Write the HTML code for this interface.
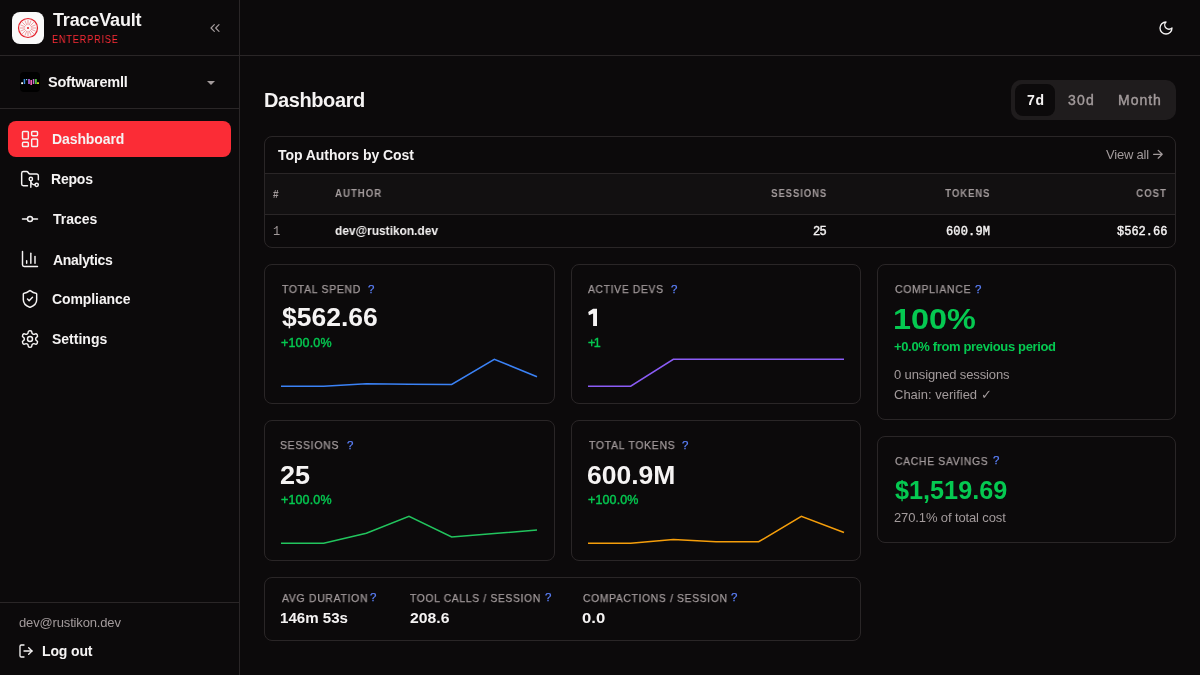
<!DOCTYPE html>
<html lang="en"><head><meta charset="utf-8"><title>TraceVault Dashboard</title>
<style>
*{box-sizing:border-box;margin:0;padding:0}
html,body{width:1200px;height:675px;overflow:hidden;background:#0c0a0b;font-family:'Liberation Sans', sans-serif;color:#f5f3f3}
.a{position:absolute}
.t{position:absolute;white-space:nowrap;line-height:1;will-change:transform}
svg{position:absolute;overflow:visible}
</style></head><body>
<div class="a" style="left:239px;top:0px;width:1px;height:675px;background:#2a2627"></div>
<div class="a" style="left:0px;top:55px;width:239px;height:1px;background:#2a2627"></div>
<div class="a" style="left:0px;top:108px;width:239px;height:1px;background:#2a2627"></div>
<div class="a" style="left:0px;top:602px;width:239px;height:1px;background:#2a2627"></div>
<div class="a" style="left:240px;top:55px;width:960px;height:1px;background:#2a2627"></div>
<div class="a" style="left:12px;top:12px;width:32px;height:32px;background:#fafafa;border-radius:8px"></div>
<svg style="left:18px;top:17.8px" width="20" height="20" viewBox="0 0 20 20" fill="none"><circle cx="10" cy="10" r="9.5" stroke="#e5222c" stroke-width="1.2"/><line x1="13.00" y1="10.00" x2="18.30" y2="10.00" stroke="#e5222c" stroke-opacity="0.35" stroke-width="1.3"/><line x1="12.77" y1="11.15" x2="17.67" y2="13.18" stroke="#e5222c" stroke-opacity="0.6" stroke-width="0.7"/><line x1="12.12" y1="12.12" x2="15.87" y2="15.87" stroke="#e5222c" stroke-opacity="0.6" stroke-width="0.7"/><line x1="11.15" y1="12.77" x2="13.18" y2="17.67" stroke="#e5222c" stroke-opacity="0.6" stroke-width="0.7"/><line x1="10.00" y1="13.00" x2="10.00" y2="18.30" stroke="#e5222c" stroke-opacity="0.35" stroke-width="1.3"/><line x1="8.85" y1="12.77" x2="6.82" y2="17.67" stroke="#e5222c" stroke-opacity="0.6" stroke-width="0.7"/><line x1="7.88" y1="12.12" x2="4.13" y2="15.87" stroke="#e5222c" stroke-opacity="0.6" stroke-width="0.7"/><line x1="7.23" y1="11.15" x2="2.33" y2="13.18" stroke="#e5222c" stroke-opacity="0.6" stroke-width="0.7"/><line x1="7.00" y1="10.00" x2="1.70" y2="10.00" stroke="#e5222c" stroke-opacity="0.35" stroke-width="1.3"/><line x1="7.23" y1="8.85" x2="2.33" y2="6.82" stroke="#e5222c" stroke-opacity="0.6" stroke-width="0.7"/><line x1="7.88" y1="7.88" x2="4.13" y2="4.13" stroke="#e5222c" stroke-opacity="0.6" stroke-width="0.7"/><line x1="8.85" y1="7.23" x2="6.82" y2="2.33" stroke="#e5222c" stroke-opacity="0.6" stroke-width="0.7"/><line x1="10.00" y1="7.00" x2="10.00" y2="1.70" stroke="#e5222c" stroke-opacity="0.35" stroke-width="1.3"/><line x1="11.15" y1="7.23" x2="13.18" y2="2.33" stroke="#e5222c" stroke-opacity="0.6" stroke-width="0.7"/><line x1="12.12" y1="7.88" x2="15.87" y2="4.13" stroke="#e5222c" stroke-opacity="0.6" stroke-width="0.7"/><line x1="12.77" y1="8.85" x2="17.67" y2="6.82" stroke="#e5222c" stroke-opacity="0.6" stroke-width="0.7"/><circle cx="10" cy="10" r="1.1" fill="#e5222c"/></svg>
<svg style="left:207px;top:20px" width="16" height="16" viewBox="0 0 24 24" fill="none" stroke="#a39b9c" stroke-width="1.8" stroke-linecap="round" stroke-linejoin="round"><path d="m11 17-5-5 5-5"/><path d="m18 17-5-5 5-5"/></svg>
<svg style="left:20px;top:72px" width="20" height="20" viewBox="0 0 20 20"><rect width="20" height="20" rx="4" fill="#000"/><rect x="1.2" y="10.3" width="1.8" height="1.8" fill="#fff"/><rect x="3.7" y="7" width="1.5" height="5" fill="#3b8fe0"/><rect x="6" y="7" width="1.2" height="1.2" fill="#7cc8f0"/><rect x="8" y="7" width="2" height="5" fill="#9a55c0"/><rect x="10.4" y="8" width="1.6" height="5" fill="#f060b0"/><rect x="12.8" y="7" width="1.5" height="5" fill="#c070d0"/><rect x="15" y="7" width="1.8" height="5" fill="#50c040"/><rect x="17" y="10.3" width="2" height="1.7" fill="#d8d020"/></svg>
<svg style="left:207px;top:81px" width="8" height="4" viewBox="0 0 8 4"><path d="M0 0h8L4 4z" fill="#a39b9c"/></svg>
<div class="a" style="left:8px;top:121px;width:223px;height:36px;background:#fb2c36;border-radius:8px"></div>
<svg style="left:20px;top:129px" width="20" height="20" viewBox="0 0 24 24" fill="none" stroke="#f5f3f3" stroke-width="1.75" stroke-linecap="round" stroke-linejoin="round"><rect width="7" height="9" x="3" y="3" rx="1"/><rect width="7" height="5" x="14" y="3" rx="1"/><rect width="7" height="9" x="14" y="12" rx="1"/><rect width="7" height="5" x="3" y="16" rx="1"/></svg>
<svg style="left:20px;top:169px" width="20" height="20" viewBox="0 0 24 24" fill="none" stroke="#f5f3f3" stroke-width="1.75" stroke-linecap="round" stroke-linejoin="round"><path d="M18 19a5 5 0 0 1-5-5v8"/><path d="M9 20H4a2 2 0 0 1-2-2V5a2 2 0 0 1 2-2h3.9a2 2 0 0 1 1.69.9l.81 1.2a2 2 0 0 0 1.67.9H20a2 2 0 0 1 2 2v5"/><circle cx="13" cy="12" r="2"/><circle cx="20" cy="19" r="2"/></svg>
<svg style="left:20px;top:209px" width="20" height="20" viewBox="0 0 24 24" fill="none" stroke="#f5f3f3" stroke-width="1.75" stroke-linecap="round" stroke-linejoin="round"><circle cx="12" cy="12" r="3"/><line x1="3" x2="9" y1="12" y2="12"/><line x1="15" x2="21" y1="12" y2="12"/></svg>
<svg style="left:20px;top:249px" width="20" height="20" viewBox="0 0 24 24" fill="none" stroke="#f5f3f3" stroke-width="1.75" stroke-linecap="round" stroke-linejoin="round"><path d="M3 3v16a2 2 0 0 0 2 2h16"/><path d="M18 17V9"/><path d="M13 17V5"/><path d="M8 17v-3"/></svg>
<svg style="left:20px;top:289px" width="20" height="20" viewBox="0 0 24 24" fill="none" stroke="#f5f3f3" stroke-width="1.75" stroke-linecap="round" stroke-linejoin="round"><path d="M20 13c0 5-3.5 7.5-7.66 8.95a1 1 0 0 1-.67-.01C7.5 20.5 4 18 4 13V6a1 1 0 0 1 1-1c2 0 4.5-1.2 6.24-2.72a1.17 1.17 0 0 1 1.52 0C14.51 3.81 17 5 19 5a1 1 0 0 1 1 1z"/><path d="m9 12 2 2 4-4"/></svg>
<svg style="left:20px;top:329px" width="20" height="20" viewBox="0 0 24 24" fill="none" stroke="#f5f3f3" stroke-width="1.75" stroke-linecap="round" stroke-linejoin="round"><path d="M12.22 2h-.44a2 2 0 0 0-2 2v.18a2 2 0 0 1-1 1.73l-.43.25a2 2 0 0 1-2 0l-.15-.08a2 2 0 0 0-2.73.73l-.22.38a2 2 0 0 0 .73 2.73l.15.1a2 2 0 0 1 1 1.72v.51a2 2 0 0 1-1 1.74l-.15.09a2 2 0 0 0-.73 2.73l.22.38a2 2 0 0 0 2.730.73l.15-.08a2 2 0 0 1 2 0l.43.25a2 2 0 0 1 1 1.73V20a2 2 0 0 0 2 2h.44a2 2 0 0 0 2-2v-.18a2 2 0 0 1 1-1.73l.43-.25a2 2 0 0 1 2 0l.15.08a2 2 0 0 0 2.73-.73l.22-.39a2 2 0 0 0-.73-2.73l-.15-.08a2 2 0 0 1-1-1.740v-.5a2 2 0 0 1 1-1.74l.15-.09a2 2 0 0 0 .73-2.73l-.22-.38a2 2 0 0 0-2.73-.73l-.15.08a2 2 0 0 1-2 0l-.43-.25a2 2 0 0 1-1-1.73V4a2 2 0 0 0-2-2z"/><circle cx="12" cy="12" r="3"/></svg>
<svg style="left:18px;top:643px" width="16" height="16" viewBox="0 0 24 24" fill="none" stroke="#f5f3f3" stroke-width="2" stroke-linecap="round" stroke-linejoin="round"><path d="M9 21H5a2 2 0 0 1-2-2V5a2 2 0 0 1 2-2h4"/><polyline points="16 17 21 12 16 7"/><line x1="21" x2="9" y1="12" y2="12"/></svg>
<svg style="left:1158px;top:20px" width="16" height="16" viewBox="0 0 24 24" fill="none" stroke="#f5f3f3" stroke-width="2" stroke-linecap="round" stroke-linejoin="round"><path d="M12 3a6 6 0 0 0 9 9 9 9 0 1 1-9-9Z"/></svg>
<div class="a" style="left:1011px;top:80px;width:165px;height:40px;background:#1f1c1d;border-radius:10px"></div>
<div class="a" style="left:1015px;top:84px;width:40px;height:32px;background:#0c0a0b;border-radius:8px"></div>
<div class="a" style="left:264px;top:136px;width:912px;height:112px;border:1px solid #2a2627;border-radius:8px;overflow:hidden"></div>
<div class="a" style="left:265px;top:173px;width:910px;height:1px;background:#2a2627"></div>
<div class="a" style="left:265px;top:174px;width:910px;height:40px;background:#121011"></div>
<div class="a" style="left:265px;top:214px;width:910px;height:1px;background:#2a2627"></div>
<svg style="left:1152px;top:149px" width="11" height="11" viewBox="0 0 11 11" fill="none" stroke="#a39b9c" stroke-width="1.25" stroke-linecap="round" stroke-linejoin="round"><path d="M1.6 5.3h8.6M6.2 1.4l4 3.9-4 3.9"/></svg>
<div class="a" style="left:264px;top:264px;width:291px;height:140px;border:1px solid #2a2627;border-radius:8px"></div>
<div class="a" style="left:571px;top:264px;width:290px;height:140px;border:1px solid #2a2627;border-radius:8px"></div>
<div class="a" style="left:264px;top:420px;width:291px;height:141px;border:1px solid #2a2627;border-radius:8px"></div>
<div class="a" style="left:571px;top:420px;width:290px;height:141px;border:1px solid #2a2627;border-radius:8px"></div>
<div class="a" style="left:877px;top:264px;width:299px;height:156px;border:1px solid #2a2627;border-radius:8px"></div>
<div class="a" style="left:877px;top:436px;width:299px;height:107px;border:1px solid #2a2627;border-radius:8px"></div>
<div class="a" style="left:264px;top:577px;width:597px;height:64px;border:1px solid #2a2627;border-radius:8px"></div>
<svg style="left:0;top:0" width="1200" height="675" viewBox="0 0 1200 675"><path d="M593.1 308.7H597V326H593.1V313.6L588.9 315.2L588.2 312.1Z" fill="#f5f3f3"/></svg>
<svg style="left:0;top:0" width="1200" height="675" viewBox="0 0 1200 675"><polyline points="281.00,386.25 323.67,386.25 366.33,383.75 409.00,384.20 451.67,384.50 494.33,359.25 537.00,376.75" fill="none" stroke="#3b82f6" stroke-width="1.5" stroke-linejoin="miter" stroke-linecap="butt"/></svg>
<svg style="left:0;top:0" width="1200" height="675" viewBox="0 0 1200 675"><polyline points="588.00,386.25 630.67,386.25 673.33,359.25 716.00,359.25 758.67,359.25 801.33,359.25 844.00,359.25" fill="none" stroke="#8b5cf6" stroke-width="1.5" stroke-linejoin="miter" stroke-linecap="butt"/></svg>
<svg style="left:0;top:0" width="1200" height="675" viewBox="0 0 1200 675"><polyline points="281.00,543.25 323.67,543.25 366.33,533.25 409.00,516.25 451.67,537.00 494.33,533.50 537.00,530.00" fill="none" stroke="#22c55e" stroke-width="1.5" stroke-linejoin="miter" stroke-linecap="butt"/></svg>
<svg style="left:0;top:0" width="1200" height="675" viewBox="0 0 1200 675"><polyline points="588.00,543.25 630.67,543.25 673.33,539.50 716.00,541.75 758.67,541.75 801.33,516.25 844.00,532.50" fill="none" stroke="#f59e0b" stroke-width="1.5" stroke-linejoin="miter" stroke-linecap="butt"/></svg>
<span id="t_brand" class="t" style="left:52.80px;top:10.88px;font-size:18px;font-weight:700;color:#f5f3f3;letter-spacing:-0.169px;font-family:'Liberation Sans', sans-serif;">TraceVault</span><span id="t_ent" class="t" style="left:51.70px;top:34.74px;font-size:10.3px;font-weight:400;color:#fb2c36;letter-spacing:0.900px;font-family:'Liberation Sans', sans-serif;transform:scaleX(0.8917);transform-origin:left center;">ENTERPRISE</span><span id="t_org" class="t" style="left:47.80px;top:75.21px;font-size:14.5px;font-weight:700;color:#f5f3f3;letter-spacing:-0.240px;font-family:'Liberation Sans', sans-serif;">Softwaremll</span><span id="t_nav0" class="t" style="left:52.00px;top:131.95px;font-size:14px;font-weight:700;color:#f5f3f3;letter-spacing:-0.100px;font-family:'Liberation Sans', sans-serif;">Dashboard</span><span id="t_nav1" class="t" style="left:51.20px;top:171.79px;font-size:14px;font-weight:700;color:#f5f3f3;letter-spacing:-0.200px;font-family:'Liberation Sans', sans-serif;">Repos</span><span id="t_nav2" class="t" style="left:52.80px;top:211.63px;font-size:14px;font-weight:700;color:#f5f3f3;letter-spacing:0.000px;font-family:'Liberation Sans', sans-serif;">Traces</span><span id="t_nav3" class="t" style="left:52.80px;top:252.91px;font-size:14px;font-weight:700;color:#f5f3f3;letter-spacing:-0.300px;font-family:'Liberation Sans', sans-serif;">Analytics</span><span id="t_nav4" class="t" style="left:52.00px;top:292.43px;font-size:14px;font-weight:700;color:#f5f3f3;letter-spacing:-0.090px;font-family:'Liberation Sans', sans-serif;">Compliance</span><span id="t_nav5" class="t" style="left:52.00px;top:332.27px;font-size:14px;font-weight:700;color:#f5f3f3;letter-spacing:0.000px;font-family:'Liberation Sans', sans-serif;">Settings</span><span id="t_femail" class="t" style="left:19.20px;top:616.28px;font-size:13px;font-weight:400;color:#a39b9c;letter-spacing:-0.155px;font-family:'Liberation Sans', sans-serif;">dev@rustikon.dev</span><span id="t_logout" class="t" style="left:41.60px;top:644.07px;font-size:14px;font-weight:700;color:#f5f3f3;letter-spacing:-0.134px;font-family:'Liberation Sans', sans-serif;">Log out</span><span id="t_title" class="t" style="left:264.20px;top:90.07px;font-size:20px;font-weight:700;color:#f5f3f3;letter-spacing:-0.400px;font-family:'Liberation Sans', sans-serif;">Dashboard</span><span id="t_seg7" class="t" style="left:1027.20px;top:92.91px;font-size:14px;font-weight:700;color:#f5f3f3;letter-spacing:0.800px;font-family:'Liberation Sans', sans-serif;">7d</span><span id="t_seg30" class="t" style="left:1068.10px;top:92.91px;font-size:14px;font-weight:400;color:#a39b9c;letter-spacing:1.200px;font-family:'Liberation Sans', sans-serif;-webkit-text-stroke:0.4px currentColor;">30d</span><span id="t_segm" class="t" style="left:1117.70px;top:92.91px;font-size:14px;font-weight:400;color:#a39b9c;letter-spacing:1.000px;font-family:'Liberation Sans', sans-serif;-webkit-text-stroke:0.4px currentColor;">Month</span><span id="t_tabtitle" class="t" style="left:278.00px;top:148.15px;font-size:14px;font-weight:700;color:#f5f3f3;letter-spacing:-0.051px;font-family:'Liberation Sans', sans-serif;">Top Authors by Cost</span><span id="t_viewall" class="t" style="left:1105.70px;top:147.84px;font-size:13px;font-weight:400;color:#a39b9c;letter-spacing:-0.200px;font-family:'Liberation Sans', sans-serif;">View all</span><span id="t_h_num" class="t" style="left:273.00px;top:190.07px;font-size:10px;font-weight:700;color:#a39b9c;letter-spacing:0.000px;font-family:'Liberation Sans', sans-serif;">#</span><span id="t_h_author" class="t" style="left:335.20px;top:189.27px;font-size:10px;font-weight:700;color:#a39b9c;letter-spacing:1.000px;font-family:'Liberation Sans', sans-serif;transform:scaleX(0.9677);transform-origin:left center;">AUTHOR</span><span id="t_h_sess" class="t" style="right:372.40px;top:189.44px;font-size:10px;font-weight:700;color:#a39b9c;letter-spacing:1.000px;font-family:'Liberation Sans', sans-serif;transform:scaleX(0.9460);transform-origin:right center;">SESSIONS</span><span id="t_h_tok" class="t" style="right:209.30px;top:189.44px;font-size:10px;font-weight:700;color:#a39b9c;letter-spacing:1.000px;font-family:'Liberation Sans', sans-serif;transform:scaleX(0.9534);transform-origin:right center;">TOKENS</span><span id="t_h_cost" class="t" style="right:32.80px;top:189.44px;font-size:10px;font-weight:700;color:#a39b9c;letter-spacing:1.000px;font-family:'Liberation Sans', sans-serif;transform:scaleX(0.9598);transform-origin:right center;">COST</span><span id="t_r_num" class="t" style="left:272.90px;top:225.81px;font-size:12px;font-weight:400;color:#a39b9c;letter-spacing:0.000px;font-family:'Liberation Mono', monospace;">1</span><span id="t_r_author" class="t" style="left:335.00px;top:223.50px;font-size:13px;font-weight:700;color:#f5f3f3;letter-spacing:0.000px;font-family:'Liberation Sans', sans-serif;transform:scaleX(0.9159);transform-origin:left center;">dev@rustikon.dev</span><span id="t_r_sess" class="t" style="right:373.80px;top:225.81px;font-size:12px;font-weight:400;color:#f5f3f3;letter-spacing:-0.800px;font-family:'Liberation Mono', monospace;-webkit-text-stroke:0.4px currentColor;">25</span><span id="t_r_tok" class="t" style="right:210.14px;top:225.81px;font-size:12px;font-weight:400;color:#f5f3f3;letter-spacing:0.160px;font-family:'Liberation Mono', monospace;-webkit-text-stroke:0.4px currentColor;">600.9M</span><span id="t_r_cost" class="t" style="right:32.79px;top:225.81px;font-size:12px;font-weight:400;color:#f5f3f3;letter-spacing:0.005px;font-family:'Liberation Mono', monospace;-webkit-text-stroke:0.4px currentColor;">$562.66</span><span id="t_a_l" class="t" style="left:281.60px;top:284.26px;font-size:11px;font-weight:400;color:#a39b9c;letter-spacing:0.750px;font-family:'Liberation Sans', sans-serif;-webkit-text-stroke:0.25px currentColor;transform:scaleX(0.9501);transform-origin:left center;">TOTAL SPEND</span><span id="t_a_l_q" class="t" style="left:368.00px;top:283.52px;font-size:11.5px;font-weight:400;color:#5c80fa;letter-spacing:0.000px;font-family:'Liberation Sans', sans-serif;-webkit-text-stroke:0.25px currentColor;">?</span><span id="t_a_v" class="t" style="left:282.00px;top:305.25px;font-size:25px;font-weight:700;color:#f5f3f3;letter-spacing:0.000px;font-family:'Liberation Sans', sans-serif;transform:scaleX(1.0606);transform-origin:left center;">$562.66</span><span id="t_a_c" class="t" style="left:281.20px;top:336.74px;font-size:12.5px;font-weight:400;color:#05c951;letter-spacing:0.138px;font-family:'Liberation Sans', sans-serif;-webkit-text-stroke:0.4px currentColor;">+100.0%</span><span id="t_b_l" class="t" style="left:588.00px;top:284.26px;font-size:11px;font-weight:400;color:#a39b9c;letter-spacing:0.750px;font-family:'Liberation Sans', sans-serif;-webkit-text-stroke:0.25px currentColor;transform:scaleX(0.9341);transform-origin:left center;">ACTIVE DEVS</span><span id="t_b_l_q" class="t" style="left:671.30px;top:283.52px;font-size:11.5px;font-weight:400;color:#5c80fa;letter-spacing:0.000px;font-family:'Liberation Sans', sans-serif;-webkit-text-stroke:0.25px currentColor;">?</span><span id="t_b_c" class="t" style="left:588.00px;top:336.74px;font-size:12.5px;font-weight:400;color:#05c951;letter-spacing:-1.600px;font-family:'Liberation Sans', sans-serif;-webkit-text-stroke:0.4px currentColor;">+1</span><span id="t_c_l" class="t" style="left:280.45px;top:440.26px;font-size:11px;font-weight:400;color:#a39b9c;letter-spacing:0.750px;font-family:'Liberation Sans', sans-serif;-webkit-text-stroke:0.25px currentColor;transform:scaleX(0.9485);transform-origin:left center;">SESSIONS</span><span id="t_c_l_q" class="t" style="left:346.75px;top:439.52px;font-size:11.5px;font-weight:400;color:#5c80fa;letter-spacing:0.000px;font-family:'Liberation Sans', sans-serif;-webkit-text-stroke:0.25px currentColor;">?</span><span id="t_c_v" class="t" style="left:280.45px;top:462.57px;font-size:25px;font-weight:700;color:#f5f3f3;letter-spacing:0.000px;font-family:'Liberation Sans', sans-serif;transform:scaleX(1.0814);transform-origin:left center;">25</span><span id="t_c_c" class="t" style="left:281.25px;top:493.97px;font-size:12.5px;font-weight:400;color:#05c951;letter-spacing:0.139px;font-family:'Liberation Sans', sans-serif;-webkit-text-stroke:0.4px currentColor;">+100.0%</span><span id="t_d_l" class="t" style="left:588.80px;top:440.26px;font-size:11px;font-weight:400;color:#a39b9c;letter-spacing:0.750px;font-family:'Liberation Sans', sans-serif;-webkit-text-stroke:0.25px currentColor;transform:scaleX(0.9503);transform-origin:left center;">TOTAL TOKENS</span><span id="t_d_l_q" class="t" style="left:682.25px;top:439.52px;font-size:11.5px;font-weight:400;color:#5c80fa;letter-spacing:0.000px;font-family:'Liberation Sans', sans-serif;-webkit-text-stroke:0.25px currentColor;">?</span><span id="t_d_v" class="t" style="left:587.20px;top:462.57px;font-size:25px;font-weight:700;color:#f5f3f3;letter-spacing:0.000px;font-family:'Liberation Sans', sans-serif;transform:scaleX(1.0593);transform-origin:left center;">600.9M</span><span id="t_d_c" class="t" style="left:588.00px;top:493.97px;font-size:12.5px;font-weight:400;color:#05c951;letter-spacing:0.125px;font-family:'Liberation Sans', sans-serif;-webkit-text-stroke:0.4px currentColor;">+100.0%</span><span id="t_e_l" class="t" style="left:894.80px;top:283.83px;font-size:11px;font-weight:400;color:#a39b9c;letter-spacing:0.750px;font-family:'Liberation Sans', sans-serif;-webkit-text-stroke:0.25px currentColor;transform:scaleX(0.9484);transform-origin:left center;">COMPLIANCE</span><span id="t_e_l_q" class="t" style="left:975.30px;top:283.57px;font-size:11.5px;font-weight:400;color:#5c80fa;letter-spacing:0.000px;font-family:'Liberation Sans', sans-serif;-webkit-text-stroke:0.25px currentColor;">?</span><span id="t_e_v" class="t" style="left:893.20px;top:305.35px;font-size:29px;font-weight:700;color:#05c951;letter-spacing:0.000px;font-family:'Liberation Sans', sans-serif;transform:scaleX(1.1163);transform-origin:left center;">100%</span><span id="t_e_c" class="t" style="left:894.00px;top:340.04px;font-size:13px;font-weight:700;color:#05c951;letter-spacing:-0.352px;font-family:'Liberation Sans', sans-serif;">+0.0% from previous period</span><span id="t_e_s1" class="t" style="left:894.00px;top:368.20px;font-size:13px;font-weight:400;color:#a39b9c;letter-spacing:-0.123px;font-family:'Liberation Sans', sans-serif;">0 unsigned sessions</span><span id="t_e_s2" class="t" style="left:894.00px;top:388.20px;font-size:13px;font-weight:400;color:#a39b9c;letter-spacing:0.000px;font-family:'Liberation Sans', sans-serif;">Chain: verified &#10003;</span><span id="t_f_l" class="t" style="left:894.80px;top:455.57px;font-size:11px;font-weight:400;color:#a39b9c;letter-spacing:0.750px;font-family:'Liberation Sans', sans-serif;-webkit-text-stroke:0.25px currentColor;transform:scaleX(0.9398);transform-origin:left center;">CACHE SAVINGS</span><span id="t_f_l_q" class="t" style="left:993.20px;top:455.47px;font-size:11.5px;font-weight:400;color:#5c80fa;letter-spacing:0.000px;font-family:'Liberation Sans', sans-serif;-webkit-text-stroke:0.25px currentColor;">?</span><span id="t_f_v" class="t" style="left:895.30px;top:477.80px;font-size:25px;font-weight:700;color:#05c951;letter-spacing:0.000px;font-family:'Liberation Sans', sans-serif;transform:scaleX(1.0092);transform-origin:left center;">$1,519.69</span><span id="t_f_s" class="t" style="left:894.00px;top:510.52px;font-size:13px;font-weight:400;color:#a39b9c;letter-spacing:-0.126px;font-family:'Liberation Sans', sans-serif;">270.1% of total cost</span><span id="t_g_l1" class="t" style="left:281.65px;top:593.03px;font-size:11px;font-weight:400;color:#a39b9c;letter-spacing:0.750px;font-family:'Liberation Sans', sans-serif;-webkit-text-stroke:0.25px currentColor;transform:scaleX(0.9467);transform-origin:left center;">AVG DURATION</span><span id="t_g_l1_q" class="t" style="left:370.35px;top:591.97px;font-size:11.5px;font-weight:400;color:#5c80fa;letter-spacing:0.000px;font-family:'Liberation Sans', sans-serif;-webkit-text-stroke:0.25px currentColor;">?</span><span id="t_g_l2" class="t" style="left:409.50px;top:593.19px;font-size:11px;font-weight:400;color:#a39b9c;letter-spacing:0.750px;font-family:'Liberation Sans', sans-serif;-webkit-text-stroke:0.25px currentColor;transform:scaleX(0.9328);transform-origin:left center;">TOOL CALLS / SESSION</span><span id="t_g_l2_q" class="t" style="left:545.00px;top:591.97px;font-size:11.5px;font-weight:400;color:#5c80fa;letter-spacing:0.000px;font-family:'Liberation Sans', sans-serif;-webkit-text-stroke:0.25px currentColor;">?</span><span id="t_g_l3" class="t" style="left:582.80px;top:593.19px;font-size:11px;font-weight:400;color:#a39b9c;letter-spacing:0.750px;font-family:'Liberation Sans', sans-serif;-webkit-text-stroke:0.25px currentColor;transform:scaleX(0.9337);transform-origin:left center;">COMPACTIONS / SESSION</span><span id="t_g_l3_q" class="t" style="left:731.00px;top:591.97px;font-size:11.5px;font-weight:400;color:#5c80fa;letter-spacing:0.000px;font-family:'Liberation Sans', sans-serif;-webkit-text-stroke:0.25px currentColor;">?</span><span id="t_g_v1" class="t" style="left:280.05px;top:609.50px;font-size:15px;font-weight:700;color:#f5f3f3;letter-spacing:0.000px;font-family:'Liberation Sans', sans-serif;transform:scaleX(1.0065);transform-origin:left center;">146m 53s</span><span id="t_g_v2" class="t" style="left:409.50px;top:610.30px;font-size:15px;font-weight:700;color:#f5f3f3;letter-spacing:0.000px;font-family:'Liberation Sans', sans-serif;transform:scaleX(1.0491);transform-origin:left center;">208.6</span><span id="t_g_v3" class="t" style="left:582.00px;top:610.46px;font-size:15px;font-weight:700;color:#f5f3f3;letter-spacing:0.000px;font-family:'Liberation Sans', sans-serif;transform:scaleX(1.1094);transform-origin:left center;">0.0</span>
</body></html>
